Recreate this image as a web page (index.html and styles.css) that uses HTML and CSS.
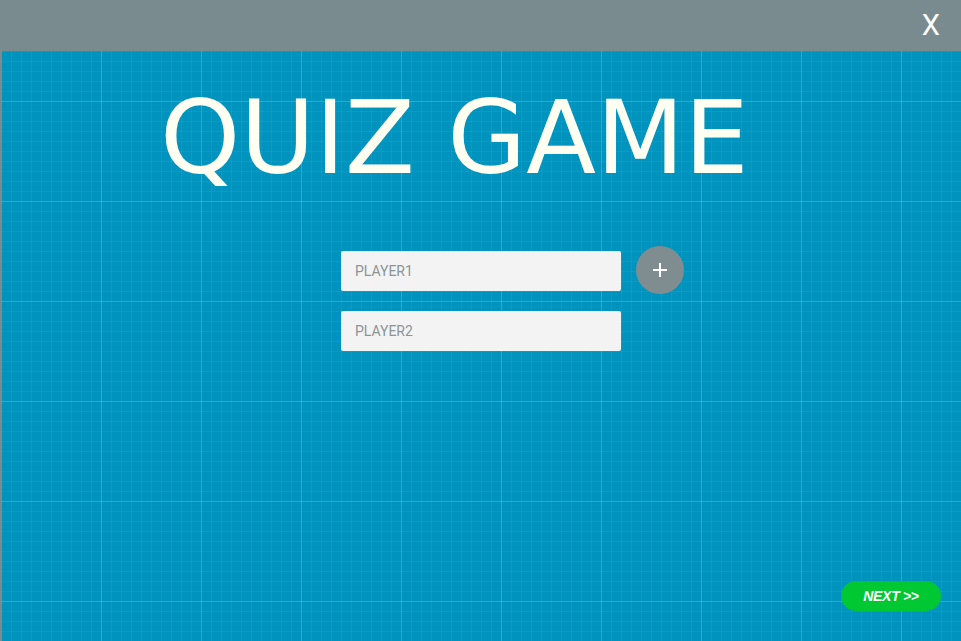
FILE: index.html
```html
<!DOCTYPE html>
<html>
<head>
<meta charset="utf-8">
<title>Quiz Game</title>
<link rel="stylesheet" href="styles.css">
</head>
<body>
<div class="app">
  <header class="topbar">
    <span class="close">X</span>
  </header>
  <main class="main">
    <h1 class="title">QUIZ GAME</h1>
    <div class="players">
      <div class="player-row">
        <input class="player-input" type="text" placeholder="PLAYER1">
        <button class="add-btn" type="button" aria-label="Add player">
          <svg width="14" height="14" viewBox="0 0 14 14"><path d="M7 0v14M0 7h14" stroke="#fff" stroke-width="2" fill="none"/></svg>
        </button>
      </div>
      <div class="player-row">
        <input class="player-input" type="text" placeholder="PLAYER2">
      </div>
    </div>
    <button class="next-btn" type="button">NEXT &gt;&gt;</button>
  </main>
</div>
</body>
</html>
```

FILE: styles.css
```css
html, body {
  margin: 0;
  padding: 0;
  height: 100%;
}
body {
  font-family: Roboto, "Liberation Sans", sans-serif;
}
.app {
  box-sizing: border-box;
  height: 641px;
  width: 961px;
  border-left: 1px solid #7a8b8f;
  border-top: 1px solid #7a8b8f;
  display: flex;
  flex-direction: column;
  background-color: #0093be;
  background-image:
    linear-gradient(rgba(255,255,255,0.14) 1px, transparent 1px),
    linear-gradient(90deg, rgba(255,255,255,0.14) 1px, transparent 1px),
    linear-gradient(rgba(255,255,255,0.05) 1px, transparent 1px),
    linear-gradient(90deg, rgba(255,255,255,0.05) 1px, transparent 1px);
  background-size: 100px 100px, 100px 100px, 10px 10px, 10px 10px;
}
.topbar {
  height: 50px;
  flex: none;
  background: #7a8b8f;
  display: flex;
  justify-content: flex-end;
  align-items: center;
  padding-right: 21px;
}
.close {
  color: #fff;
  font-family: Roboto, sans-serif;
  font-size: 29px;
  line-height: 1;
  margin-top: -2px;
}
.main {
  flex: 1;
  display: flex;
  flex-direction: column;
}
.title {
  margin: 37px 0 0 0;
  padding-left: 159px;
  font-family: "DejaVu Sans", sans-serif;
  font-weight: normal;
  font-size: 102px;
  line-height: 100px;
  color: #fffff2;
}
.players {
  margin-top: 63px;
  display: flex;
  flex-direction: column;
  gap: 20px;
}
.player-row {
  display: grid;
  grid-template-columns: 1fr 280px 1fr;
  align-items: center;
}
.player-input {
  grid-column: 2;
  box-sizing: border-box;
  width: 280px;
  height: 40px;
  border: none;
  border-radius: 2px;
  background: #f3f3f3;
  padding: 0 0 0 14px;
  font-family: Roboto, sans-serif;
  font-size: 14px;
  color: #55666a;
  outline: none;
}
.player-input::placeholder {
  color: #8a9599;
}
.add-btn {
  grid-column: 3;
  justify-self: start;
  margin: -5px 0 -3px 15px;
  width: 48px;
  height: 48px;
  border: none;
  border-radius: 50%;
  background: #7f8d91;
  padding: 0;
  display: flex;
  align-items: center;
  justify-content: center;
}
.add-btn svg {
  display: block;
}
.next-btn {
  margin-top: auto;
  align-self: flex-end;
  margin-right: 20px;
  margin-bottom: 30px;
  width: 100px;
  height: 30px;
  border: none;
  border-radius: 15px;
  background: #00c832;
  color: #fff;
  font-family: "Liberation Sans", Arial, sans-serif;
  font-style: italic;
  font-weight: bold;
  font-size: 14px;
  letter-spacing: -0.3px;
  padding: 0;
  line-height: 30px;
}
```
